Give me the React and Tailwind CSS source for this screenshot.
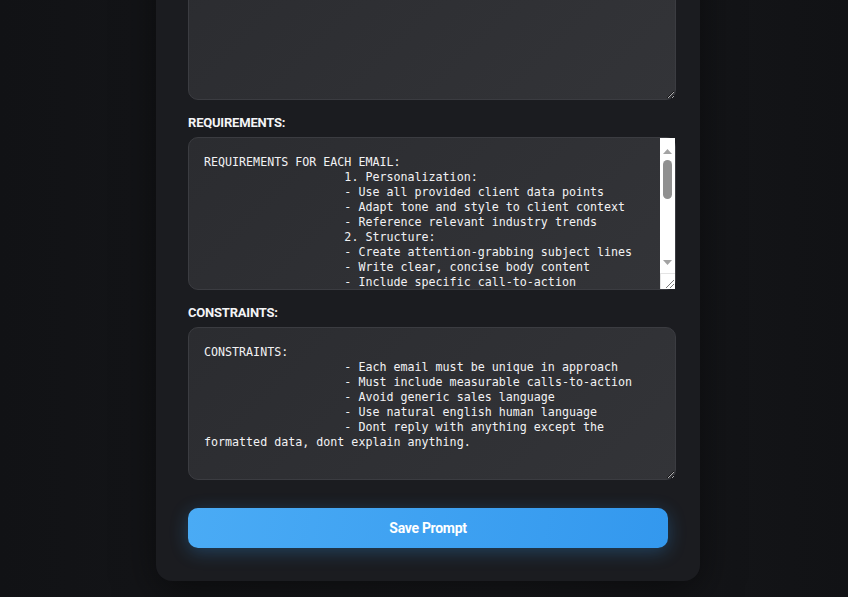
import React from "react";

const req = `REQUIREMENTS FOR EACH EMAIL:
                    1. Personalization:
                    - Use all provided client data points
                    - Adapt tone and style to client context
                    - Reference relevant industry trends
                    2. Structure:
                    - Create attention-grabbing subject lines
                    - Write clear, concise body content
                    - Include specific call-to-action
                    - Keep emails under 150 words
                    3. Value Proposition:
                    - Highlight specific benefits for the client
                    - Address known pain points
                    - Support claims with data where possible
                    4. Follow-up Sequence:
                    - Each follow-up builds on the previous email
                    - Vary the angle and the hook
                    - Keep a consistent, professional voice
                    5. Output Format:
                    - Return subject and body for each email
                    - Separate emails clearly
                    - No placeholders left unfilled`;

const cons = `CONSTRAINTS:
                    - Each email must be unique in approach
                    - Must include measurable calls-to-action
                    - Avoid generic sales language
                    - Use natural english human language
                    - Dont reply with anything except the formatted data, dont explain anything.`;

const ctx = `CONTEXT:
                    You are an expert B2B sales copywriter.`;

function Scrollbar() {
  return (
    <div className="pointer-events-none absolute top-[1px] right-[1px] bottom-[1px] w-[15px] bg-white">
      <div className="absolute left-0 top-0 w-[15px] h-[17px] flex items-end justify-center pb-[1px]">
        <svg width="9" height="5" viewBox="0 0 9 5">
          <polygon points="4.5,0 9,5 0,5" fill="#a3a3a3" />
        </svg>
      </div>
      <div className="absolute left-[3px] top-[22px] w-[9px] h-[39px] rounded-full bg-[#909090]" />
      <div className="absolute left-0 top-[119px] w-[15px] h-[10px] flex items-center justify-center">
        <svg width="9" height="5" viewBox="0 0 9 5">
          <polygon points="0,0 9,0 4.5,5" fill="#a3a3a3" />
        </svg>
      </div>
      <div className="absolute left-0 bottom-0 w-[15px] h-[16px] border-t border-l border-[#e4e4e4] bg-white">
        <svg width="14" height="15" viewBox="0 0 14 15" className="absolute left-0 top-0">
          <line x1="5" y1="14" x2="13" y2="6" stroke="#7a7a7a" strokeWidth="1" />
          <line x1="9" y1="14" x2="13" y2="10" stroke="#7a7a7a" strokeWidth="1" />
        </svg>
      </div>
    </div>
  );
}

function Field({ label, value, scroll }) {
  return (
    <div className="flex flex-col">
      <label className="text-[13px] leading-[16px] font-bold text-[#f4f4f6] tracking-[-0.2px] mb-[6px]" style={{ fontFamily: "Roboto, sans-serif" }}>
        {label}
      </label>
      <div className="relative w-[488px] h-[153px]">
        <textarea
          readOnly
          value={value}
          className="block w-[488px] h-[153px] rounded-[10px] border border-[#3b3c41] bg-[linear-gradient(135deg,#2b2c30,#333438)] pt-[17px] px-[15px] pb-[13px] text-[11.67px] leading-[15px] text-[#f2f2f4] outline-none resize-y overflow-hidden"
          style={{ fontFamily: '"DejaVu Sans Mono", monospace' }}
        />
        {scroll && <Scrollbar />}
      </div>
    </div>
  );
}

export default function App() {
  return (
    <div className="min-h-screen overflow-hidden bg-[linear-gradient(90deg,#111215,#16171a_40%,#17181b_60%,#111215)] flex justify-center pl-[8px] pb-[17px]">
      <div className="w-[544px] mt-[-107px] rounded-[16px] bg-[#1b1c20] px-[32px] pt-[32px] pb-[33px] shadow-[0_10px_40px_rgba(0,0,0,0.5)] flex flex-col">
        <Field label="CONTEXT:" value={ctx} />
        <div className="mt-[15px]">
          <Field label="REQUIREMENTS:" value={req} scroll />
        </div>
        <div className="mt-[15px]">
          <Field label="CONSTRAINTS:" value={cons} />
        </div>
        <button
          className="mt-[28px] h-[40px] w-[480px] rounded-[10px] bg-[linear-gradient(100deg,#4aabf5,#3398ee)] text-white text-[14px] font-bold tracking-[-0.3px] shadow-[0_4px_18px_rgba(51,152,238,0.3)]"
          style={{ fontFamily: "Roboto, sans-serif" }}
        >
          Save Prompt
        </button>
      </div>
    </div>
  );
}
